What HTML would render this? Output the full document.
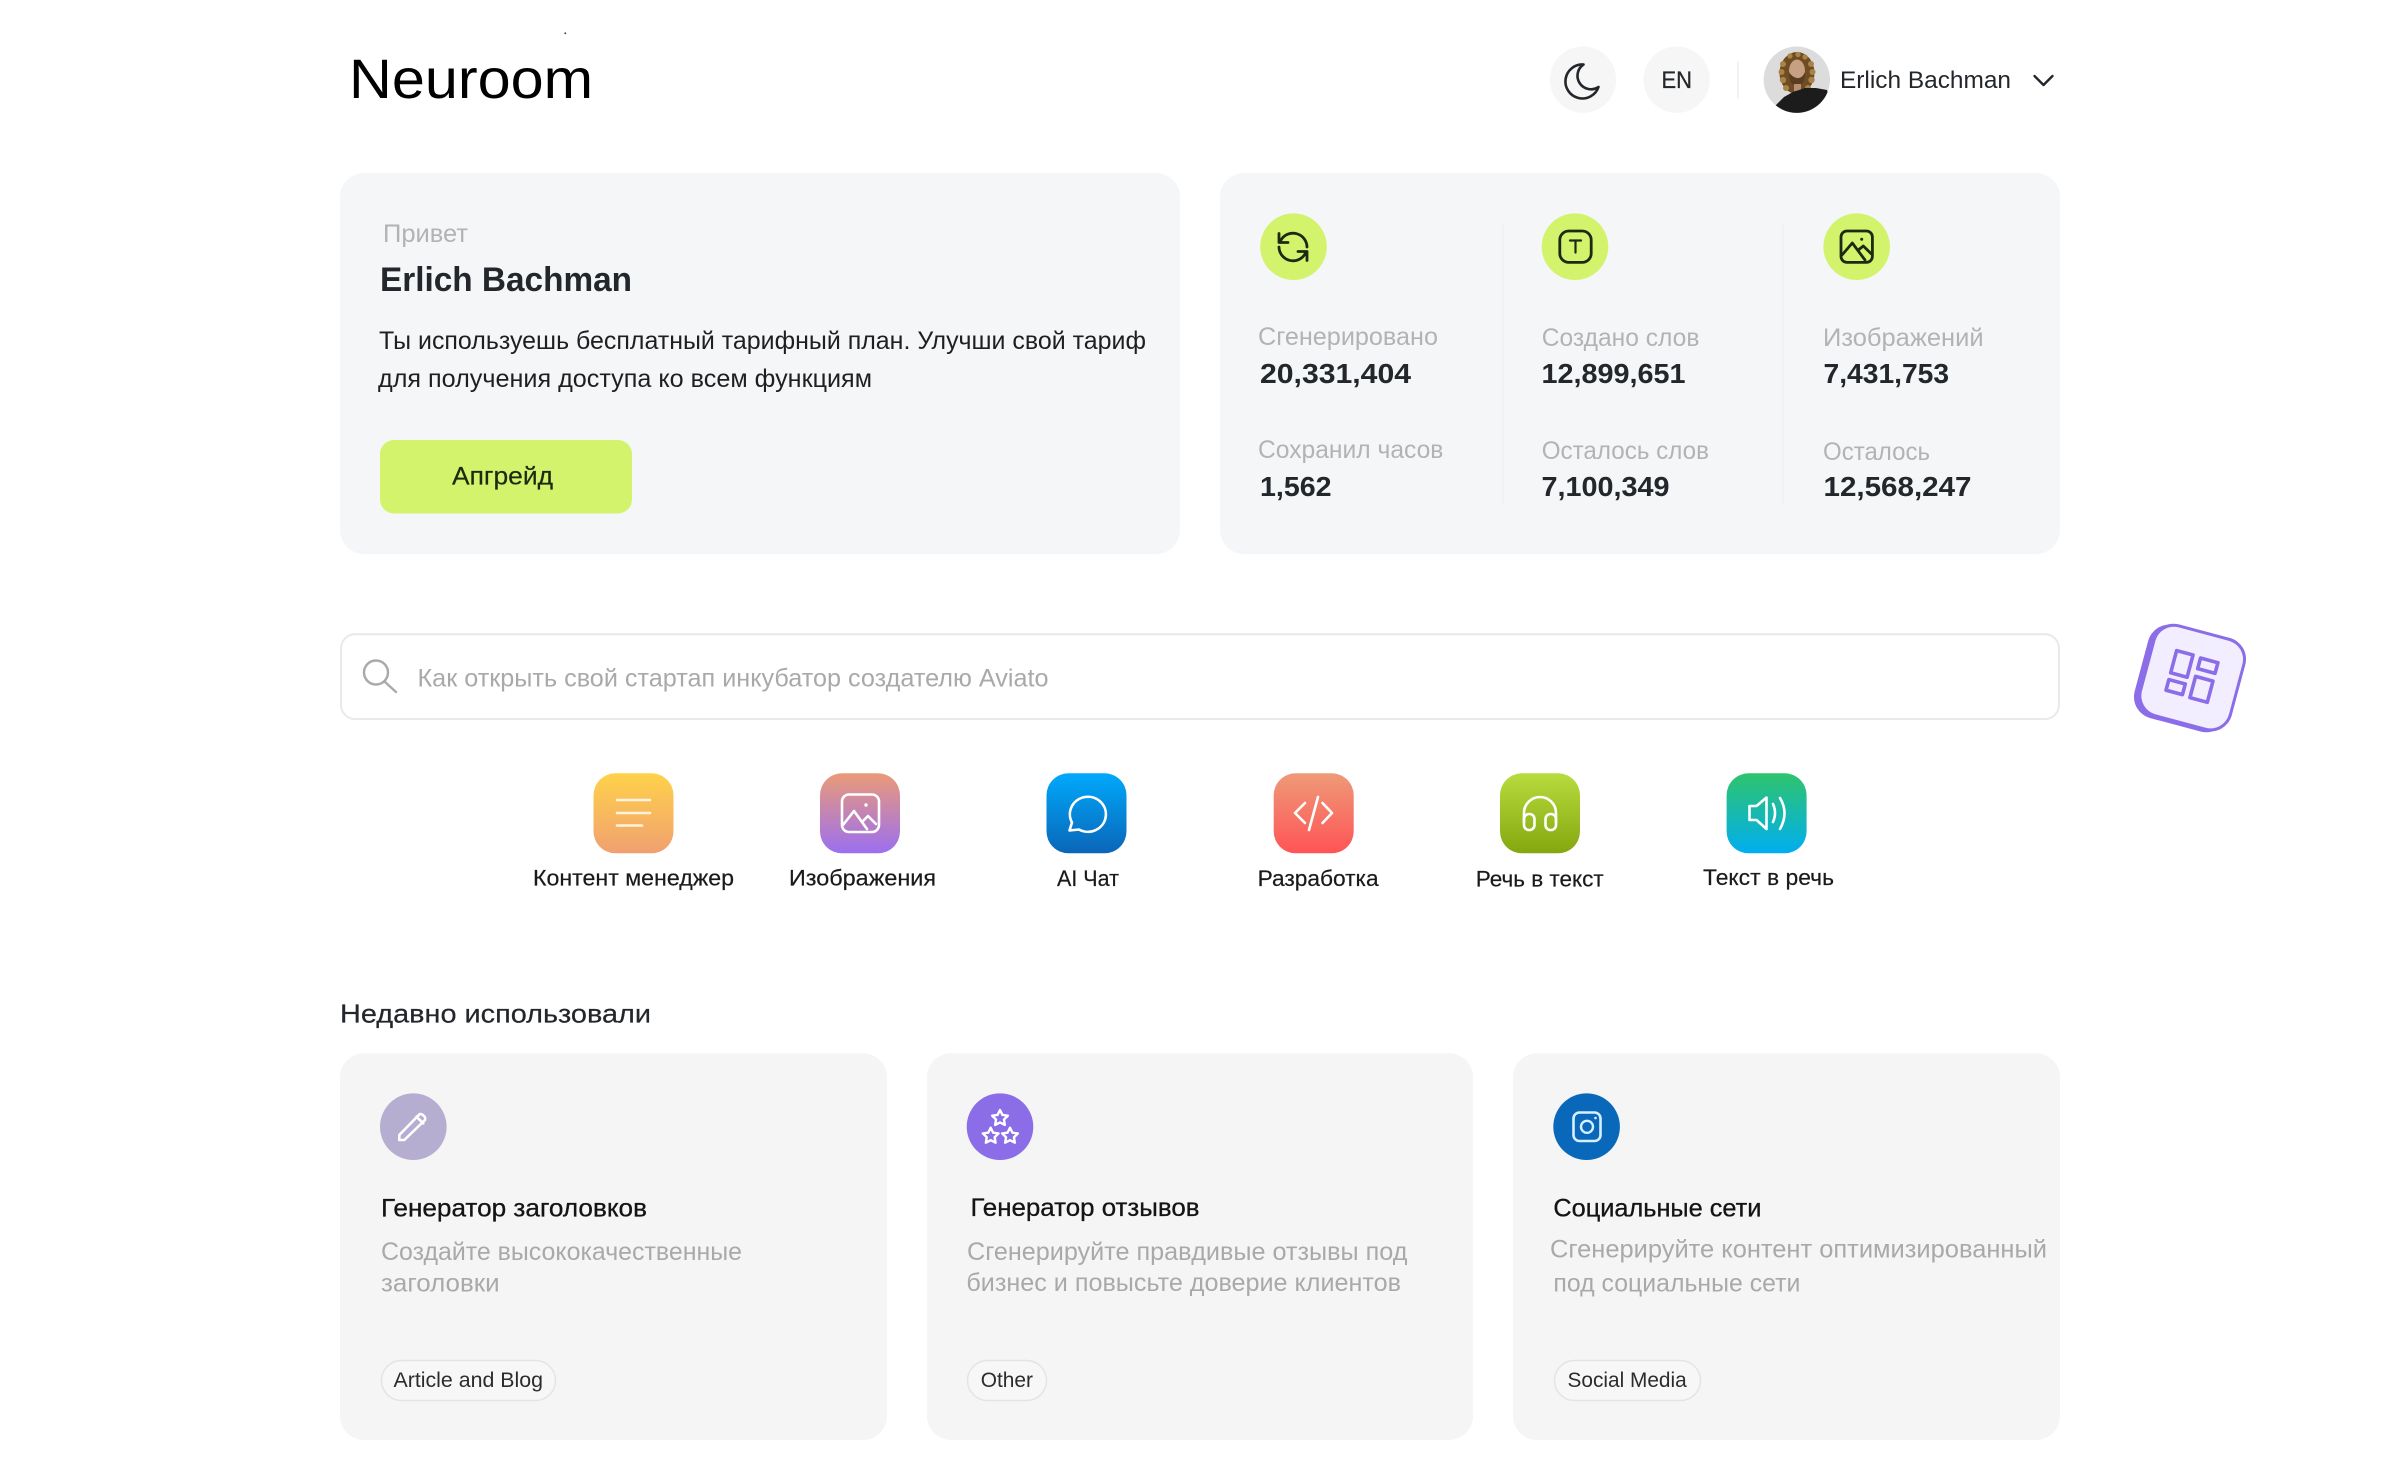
<!DOCTYPE html>
<html lang="ru">
<head>
<meta charset="utf-8">
<title>Neuroom</title>
<style>
html,body{margin:0;padding:0;background:#fff;width:2400px;height:1480px;overflow:hidden}
svg{display:block}
text{font-family:"Liberation Sans","Noto Sans CJK SC",sans-serif;white-space:pre}
.g{fill:#b3b3b3;font-size:25px}
.n{fill:#23272b;font-size:28px;font-weight:700;stroke:none}
.d{fill:#1f1f1f;font-size:25px}
.l{fill:#1a1a1a;font-size:22.5px;stroke:#1a1a1a;stroke-width:.2px}
.t{fill:#141414;font-size:25px;stroke:#141414;stroke-width:.3px}
.s{fill:#a9a9a9;font-size:25px}
.c{fill:#2c2c2c;font-size:21px}
.w{fill:none;stroke:#fff;stroke-width:2.6;stroke-linecap:round;stroke-linejoin:round}
.k{fill:none;stroke:#1d2a12;stroke-width:2.8;stroke-linecap:round;stroke-linejoin:round}
</style>
</head>
<body>
<svg width="2400" height="1480" viewBox="0 0 2400 1480" xmlns="http://www.w3.org/2000/svg">
<defs>
<linearGradient id="a1" x1="0" y1="0" x2="0" y2="1"><stop offset="0" stop-color="#ffd24a"/><stop offset="1" stop-color="#f0a070"/></linearGradient>
<linearGradient id="a2" x1="0" y1="0" x2="0" y2="1"><stop offset="0" stop-color="#ea9a78"/><stop offset="1" stop-color="#9b6ff0"/></linearGradient>
<linearGradient id="a3" x1="0" y1="0" x2="0" y2="1"><stop offset="0" stop-color="#00a9fb"/><stop offset="1" stop-color="#0a66b8"/></linearGradient>
<linearGradient id="a4" x1="0" y1="0" x2="0" y2="1"><stop offset="0" stop-color="#ee9a78"/><stop offset="1" stop-color="#ff5456"/></linearGradient>
<linearGradient id="a5" x1="0" y1="0" x2="0" y2="1"><stop offset="0" stop-color="#b8dc3e"/><stop offset="1" stop-color="#84a70f"/></linearGradient>
<linearGradient id="a6" x1="0" y1="0" x2="0" y2="1"><stop offset="0" stop-color="#2fc46c"/><stop offset="1" stop-color="#00aef0"/></linearGradient>
<clipPath id="av"><circle cx="1796.8" cy="79.7" r="33.2"/></clipPath>
</defs>

<!-- header -->
<rect x="564.5" y="32.5" width="1.6" height="1.6" fill="#333"/>
<text x="349" y="98" font-size="56" fill="#000" textLength="244" lengthAdjust="spacingAndGlyphs">Neuroom</text>
<circle cx="1583" cy="79.7" r="33.2" fill="#f6f6f6"/>
<path d="M1583.5 64.5a12 12 0 0 0 15 22.5 17 17 0 1 1-15-22.5Z" fill="none" stroke="#23272b" stroke-width="2.6" stroke-linejoin="round"/>
<circle cx="1676.7" cy="79.7" r="33.2" fill="#f6f6f6"/>
<text x="1661.5" y="88" font-size="24" fill="#23272b" stroke="#23272b" stroke-width=".25" textLength="30.5" lengthAdjust="spacingAndGlyphs">EN</text>
<rect x="1737" y="61" width="2" height="38" fill="#f2f2f2"/>
<g clip-path="url(#av)">
<rect x="1760" y="44" width="74" height="74" fill="#dcdcdc"/>
<ellipse cx="1797" cy="73" rx="17.5" ry="21" fill="#6f4c24"/>
<g fill="#a98345">
<circle cx="1783" cy="64" r="3"/><circle cx="1781.5" cy="72" r="3"/><circle cx="1783" cy="80" r="3.2"/><circle cx="1786" cy="88" r="3"/>
<circle cx="1811" cy="64" r="3"/><circle cx="1812.5" cy="72" r="3"/><circle cx="1811.5" cy="80" r="3.2"/><circle cx="1808" cy="88" r="3"/>
<circle cx="1790" cy="56" r="2.6"/><circle cx="1798" cy="54.5" r="2.6"/><circle cx="1805" cy="57" r="2.6"/>
</g>
<ellipse cx="1797" cy="71" rx="8" ry="11.5" fill="#c7a083"/>
<path d="M1789 72Q1789 86 1797 86T1805 72Q1802 79 1797 78T1789 72Z" fill="#5a3c20"/>
<rect x="1794" y="84" width="7" height="7" fill="#b58f72"/>
<path d="M1770 118L1775 106 1784 97 1793 92 1805 88 1816 88 1827 90 1834 118Z" fill="#1c1c1c"/>
</g>
<text x="1840" y="88" font-size="24" fill="#23272b" textLength="171" lengthAdjust="spacingAndGlyphs">Erlich Bachman</text>
<path d="M2034.5 76l9 9 9-9" fill="none" stroke="#23272b" stroke-width="2.4" stroke-linecap="round" stroke-linejoin="round"/>

<!-- greeting card -->
<rect x="340" y="173" width="840" height="381" rx="24" fill="#f4f6f8"/>
<text class="g" x="383" y="242" textLength="85" lengthAdjust="spacingAndGlyphs">Привет</text>
<text x="380" y="291" font-size="34" font-weight="700" fill="#23272b" textLength="252" lengthAdjust="spacingAndGlyphs">Erlich Bachman</text>
<text class="d" x="379" y="349" textLength="767" lengthAdjust="spacingAndGlyphs">Ты используешь бесплатный тарифный план. Улучши свой тариф</text>
<text class="d" x="378" y="387" textLength="494" lengthAdjust="spacingAndGlyphs">для получения доступа ко всем функциям</text>
<rect x="380" y="440" width="252" height="73.5" rx="14" fill="#d4f36c"/>
<text x="452" y="484.6" font-size="25" fill="#1d2a12" stroke="#1d2a12" stroke-width=".2" textLength="101" lengthAdjust="spacingAndGlyphs">Апгрейд</text>

<!-- stats card -->
<rect x="1220" y="173" width="840" height="381" rx="24" fill="#f4f6f8"/>
<rect x="1502" y="224" width="1.6" height="281" fill="#eef0f2"/>
<rect x="1782" y="224" width="1.6" height="281" fill="#eef0f2"/>
<circle cx="1293.5" cy="246.7" r="33.3" fill="#d4f36c"/>
<path class="k" stroke-width="2.6" d="M1307 247A14 14 0 0 0 1281 240M1279 233.5v9h9M1279 247A14 14 0 0 0 1305 254M1307 260.5v-9h-9"/>
<circle cx="1575" cy="246.7" r="33.3" fill="#d4f36c"/>
<rect class="k" x="1559.8" y="231" width="31.4" height="31.4" rx="9"/>
<path d="M1570 240.5h11M1575.5 240.5v12" fill="none" stroke="#1d2a12" stroke-width="2.2" stroke-linecap="round"/>
<circle cx="1856.7" cy="246.7" r="33.3" fill="#d4f36c"/>
<rect class="k" x="1841" y="231" width="31.4" height="31.4" rx="6"/>
<path class="k" stroke-width="2.4" d="M1842 255L1852.3 243 1865 260M1858.3 250L1863.3 246 1872 254.5"/>
<circle cx="1861.7" cy="239.3" r="1.5" fill="#1d2a12"/>
<text class="g" x="1258" y="345" textLength="180" lengthAdjust="spacingAndGlyphs">Сгенерировано</text>
<text class="n" x="1260" y="383" textLength="151" lengthAdjust="spacingAndGlyphs">20,331,404</text>
<text class="g" x="1258" y="458" textLength="185.4" lengthAdjust="spacingAndGlyphs">Сохранил часов</text>
<text class="n" x="1260" y="496" textLength="71.5" lengthAdjust="spacingAndGlyphs">1,562</text>
<text class="g" x="1541.7" y="346" textLength="157.7" lengthAdjust="spacingAndGlyphs">Создано слов</text>
<text class="n" x="1541.5" y="383" textLength="144" lengthAdjust="spacingAndGlyphs">12,899,651</text>
<text class="g" x="1541.7" y="459" textLength="167.3" lengthAdjust="spacingAndGlyphs">Осталось слов</text>
<text class="n" x="1541.5" y="496" textLength="128" lengthAdjust="spacingAndGlyphs">7,100,349</text>
<text class="g" x="1823" y="346" textLength="160.6" lengthAdjust="spacingAndGlyphs">Изображений</text>
<text class="n" x="1823.5" y="383" textLength="125.6" lengthAdjust="spacingAndGlyphs">7,431,753</text>
<text class="g" x="1823" y="460" textLength="107" lengthAdjust="spacingAndGlyphs">Осталось</text>
<text class="n" x="1823.5" y="496" textLength="148" lengthAdjust="spacingAndGlyphs">12,568,247</text>

<!-- search -->
<rect x="341" y="634.3" width="1718" height="84.7" rx="14" fill="#fff" stroke="#e9e9e9" stroke-width="2"/>
<circle cx="376" cy="672.5" r="12" fill="none" stroke="#a9a9a9" stroke-width="2.4"/>
<path d="M384.5 681.5L396 692" stroke="#a9a9a9" stroke-width="2.4" stroke-linecap="round"/>
<text class="s" x="417.5" y="686.5" textLength="631" lengthAdjust="spacingAndGlyphs">Как открыть свой стартап инкубатор создателю Aviato</text>

<!-- floating widget -->
<g transform="translate(2190 678) rotate(15)">
<rect x="-50" y="-47" width="96" height="96" rx="22" fill="#8b6de8"/>
<rect x="-46" y="-49" width="96" height="96" rx="22" fill="#8b6de8"/>
<rect x="-43" y="-46" width="90" height="90" rx="19" fill="#f2edff"/>
<g fill="none" stroke="#8b6de8" stroke-width="3.6" stroke-linejoin="round">
<rect x="-20" y="-23" width="17" height="23"/>
<rect x="5" y="-22" width="18" height="11"/>
<rect x="-20" y="7" width="17" height="11"/>
<rect x="5" y="-3" width="18" height="22"/>
</g>
</g>

<!-- quick categories -->
<rect x="593.5" y="773.3" width="80" height="80" rx="22" fill="url(#a1)"/>
<path class="w" stroke-width="3" d="M617 800h33M617 813h33M617 825.5h25" style="stroke:#fff3df"/>
<rect x="820" y="773.3" width="80" height="80" rx="22" fill="url(#a2)"/>
<rect class="w" x="842" y="794.5" width="37" height="37.5" rx="7"/>
<path class="w" d="M843 825L854 811 867 829M862 822L868 816 876 824"/>
<circle cx="866" cy="805" r="1.7" fill="#fff"/>
<rect x="1046.5" y="773.3" width="80" height="80" rx="22" fill="url(#a3)"/>
<path class="w" d="M1069.5 830.5L1072 822.5A18 17.5 0 1 1 1079 829.5Z"/>
<rect x="1273.7" y="773.3" width="80" height="80" rx="22" fill="url(#a4)"/>
<path class="w" d="M1305 803L1295 813 1305 823M1322.5 803L1332 813 1322.5 823M1318 797L1309 830"/>
<rect x="1500" y="773.3" width="80" height="80" rx="22" fill="url(#a5)"/>
<path class="w" stroke-width="2.4" d="M1524 822V813A16 16 0 0 1 1556 813V822"/>
<rect class="w" stroke-width="2.4" x="1524" y="814" width="10.5" height="16" rx="5"/>
<rect class="w" stroke-width="2.4" x="1545.5" y="814" width="10.5" height="16" rx="5"/>
<rect x="1726.6" y="773.3" width="80" height="80" rx="22" fill="url(#a6)"/>
<path class="w" d="M1766.5 797.5L1756.5 806H1749.5V820H1756.5L1766.5 829Z"/>
<path class="w" d="M1773 804Q1777 813 1773 822M1780 798Q1789 813 1780 829"/>
<text class="l" x="533" y="885.7" textLength="201" lengthAdjust="spacingAndGlyphs">Контент менеджер</text>
<text class="l" x="789" y="885.7" textLength="147" lengthAdjust="spacingAndGlyphs">Изображения</text>
<text class="l" x="1057" y="886" textLength="62" lengthAdjust="spacingAndGlyphs">AI Чат</text>
<text class="l" x="1257.6" y="886" textLength="121" lengthAdjust="spacingAndGlyphs">Разработка</text>
<text class="l" x="1475.7" y="886.7" textLength="128" lengthAdjust="spacingAndGlyphs">Речь в текст</text>
<text class="l" x="1703" y="885" textLength="131" lengthAdjust="spacingAndGlyphs">Текст в речь</text>

<!-- recent -->
<text x="340" y="1022.7" font-size="26" fill="#23272b" stroke="#23272b" stroke-width=".2" textLength="311" lengthAdjust="spacingAndGlyphs">Недавно использовали</text>

<rect x="340" y="1053.3" width="547" height="386.7" rx="24" fill="#f5f5f6"/>
<circle cx="413.3" cy="1126.7" r="33.3" fill="#b5aed0"/>
<path class="w" d="M399.3 1135V1140H404.3L425 1120C426.5 1116 420 1112.5 419 1114.8ZM416.5 1116.8L423.3 1123.3"/>
<text class="t" x="381" y="1216.7" textLength="266" lengthAdjust="spacingAndGlyphs">Генератор заголовков</text>
<text class="s" x="381" y="1260" textLength="361" lengthAdjust="spacingAndGlyphs">Создайте высококачественные</text>
<text class="s" x="381" y="1291.7" textLength="118.6" lengthAdjust="spacingAndGlyphs">заголовки</text>
<rect x="381.5" y="1360.5" width="174" height="40" rx="20" fill="#f7f7f7" stroke="#e4e4e4" stroke-width="1.5"/>
<text class="c" x="393.5" y="1387" textLength="149.5" lengthAdjust="spacingAndGlyphs">Article and Blog</text>

<rect x="927" y="1053.3" width="546" height="386.7" rx="24" fill="#f5f5f6"/>
<circle cx="1000" cy="1126.7" r="33.3" fill="#8b6de8"/>
<g class="w" stroke-width="3"><polygon transform="translate(1000 1118.3) scale(.92)" points="0,-9 2.65,-3.64 8.56,-2.78 4.28,1.39 5.29,7.28 0,4.5 -5.29,7.28 -4.28,1.39 -8.56,-2.78 -2.65,-3.64"/><polygon transform="translate(990.7 1136) scale(.92)" points="0,-9 2.65,-3.64 8.56,-2.78 4.28,1.39 5.29,7.28 0,4.5 -5.29,7.28 -4.28,1.39 -8.56,-2.78 -2.65,-3.64"/><polygon transform="translate(1010 1136) scale(.92)" points="0,-9 2.65,-3.64 8.56,-2.78 4.28,1.39 5.29,7.28 0,4.5 -5.29,7.28 -4.28,1.39 -8.56,-2.78 -2.65,-3.64"/></g>
<text class="t" x="970.5" y="1216" textLength="229" lengthAdjust="spacingAndGlyphs">Генератор отзывов</text>
<text class="s" x="967" y="1260" textLength="440.4" lengthAdjust="spacingAndGlyphs">Сгенерируйте правдивые отзывы под</text>
<text class="s" x="966.4" y="1291" textLength="434.6" lengthAdjust="spacingAndGlyphs">бизнес и повысьте доверие клиентов</text>
<rect x="967.5" y="1360.5" width="79" height="40" rx="20" fill="#f7f7f7" stroke="#e4e4e4" stroke-width="1.5"/>
<text class="c" x="980.7" y="1387" textLength="52.3" lengthAdjust="spacingAndGlyphs">Other</text>

<rect x="1513" y="1053.3" width="547" height="386.7" rx="24" fill="#f5f5f6"/>
<circle cx="1586.6" cy="1126.7" r="33.3" fill="#0a68bb"/>
<rect x="1573.5" y="1112.5" width="27" height="28.5" rx="6" fill="none" stroke="#d6f0ff" stroke-width="2.6"/>
<circle cx="1587" cy="1126.8" r="6" fill="none" stroke="#d6f0ff" stroke-width="2.4"/>
<circle cx="1595.5" cy="1118" r="1.3" fill="#d6f0ff"/>
<text class="t" x="1553.4" y="1216.7" textLength="208" lengthAdjust="spacingAndGlyphs">Социальные сети</text>
<text class="s" x="1550" y="1257.7" textLength="497" lengthAdjust="spacingAndGlyphs">Сгенерируйте контент оптимизированный</text>
<text class="s" x="1553.4" y="1291.7" textLength="247" lengthAdjust="spacingAndGlyphs">под социальные сети</text>
<rect x="1554.5" y="1360.5" width="146" height="40" rx="20" fill="#f7f7f7" stroke="#e4e4e4" stroke-width="1.5"/>
<text class="c" x="1567.5" y="1387" textLength="119.2" lengthAdjust="spacingAndGlyphs">Social Media</text>
</svg>
</body>
</html>
